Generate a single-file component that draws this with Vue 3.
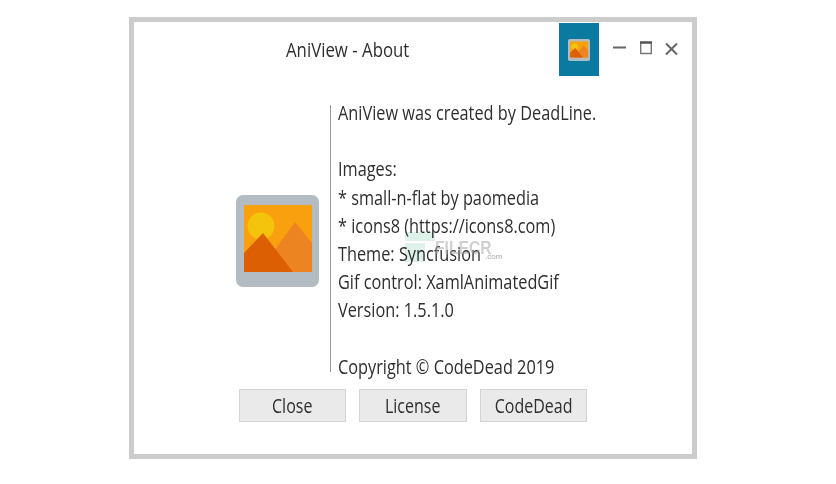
<script setup>
const lines = [
  'AniView was created by DeadLine.',
  '',
  'Images:',
  '* small-n-flat by paomedia',
  '* icons8 (https://icons8.com)',
  'Theme: Syncfusion',
  'Gif control: XamlAnimatedGif',
  'Version: 1.5.1.0',
  '',
  'Copyright © CodeDead 2019'
]
const buttons = ['Close', 'License', 'CodeDead']
</script>

<template>
  <div class="page">
    <div class="window">
      <header class="titlebar">
        <div class="title"><span class="squeeze">AniView - About</span></div>
        <div class="tile">
          <svg width="22" height="22" viewBox="0 0 83 92" preserveAspectRatio="none">
            <use href="#picture" />
          </svg>
        </div>
        <div class="controls">
          <svg width="13" height="14" viewBox="0 0 13 14"><path d="M0 6.500h13" stroke="#666" stroke-width="2" /></svg>
          <svg width="12" height="14" viewBox="0 0 12 14"><path d="M.7 1.500h10.600v11H.7z" fill="none" stroke="#777" stroke-width="1.400" /><path d="M0 1.500h12" stroke="#555" stroke-width="2.400" /></svg>
          <svg class="close" width="13" height="14" viewBox="0 0 13 14"><path d="M1 2.500l11 11M12 2.500l-11 11" stroke="#666" stroke-width="2" /></svg>
        </div>
      </header>

      <main class="body">
        <div class="logo-col">
          <svg class="logo" width="83" height="92" viewBox="0 0 83 92">
            <g id="picture">
              <rect width="83" height="92" rx="7" fill="#b3bcc2" />
              <rect x="8" y="10" width="68" height="67" fill="#f9a00f" />
              <circle cx="25" cy="31" r="13.500" fill="#f4c40d" />
              <path d="M23 77 59 27l17 21v29z" fill="#ec8422" />
              <path d="M8 58 27 38l30 39H8z" fill="#dc5f04" />
            </g>
          </svg>
        </div>
        <div class="rule"></div>
        <div class="text">
          <div class="squeeze-block">
            <p v-for="(line, i) in lines" :key="i" class="line">{{ line }}</p>
          </div>
        </div>
      </main>

      <footer class="footer">
        <div v-for="b in buttons" :key="b" class="btn"><span class="squeeze">{{ b }}</span></div>
      </footer>

      <div class="watermark">
        <span class="wm-bar wm-top"></span>
        <span class="wm-bar wm-low"></span>
        <span class="wm-name">FILECR</span>
        <span class="wm-com">.com</span>
      </div>
    </div>
  </div>
</template>

<style>
html, body { margin: 0; background: #fff; }
</style>

<style scoped>
.page {
  width: 836px;
  height: 484px;
  padding: 17px 0 0 129px;
  box-sizing: border-box;
  overflow: hidden;
  background: #fff;
  font-family: "Open Sans", "Noto Sans", sans-serif;
  color: #2e2e2e;
}
.window {
  position: relative;
  width: 568px;
  height: 442px;
  box-sizing: border-box;
  border: 5px solid #ccc;
  background: #fff;
  display: flex;
  flex-direction: column;
  filter: blur(0.35px);
}
.titlebar {
  display: flex;
  align-items: flex-start;
  height: 77px;
  flex: none;
}
.title {
  width: 425px;
  padding-left: 152px;
  box-sizing: border-box;
  font-size: 20px;
  line-height: 28px;
  margin-top: 14px;
  white-space: nowrap;
}
.squeeze {
  display: inline-block;
  transform: scaleX(0.84);
  transform-origin: left center;
  white-space: nowrap;
}
.tile {
  width: 40px;
  height: 53px;
  margin-top: 1px;
  background: #0b7aa0;
  display: flex;
  align-items: center;
  justify-content: center;
}
.controls {
  display: flex;
  gap: 14px;
  margin: 19px 0 0 14px;
}
.close { margin-left: -1px; }
.body {
  display: flex;
  height: 282px;
  flex: none;
}
.logo-col {
  width: 196px;
  padding: 96px 0 0 102px;
  box-sizing: border-box;
}
.logo { display: block; }
.rule {
  width: 1px;
  height: 267px;
  margin-top: 6px;
  background: #999;
  flex: none;
}
.text {
  padding: 0 0 0 7px;
  margin-top: -1px;
}
.squeeze-block {
  transform: scaleX(0.795);
  transform-origin: left top;
  white-space: nowrap;
  font-size: 20.500px;
}
.line {
  margin: 0;
  height: 28.200px;
  line-height: 28.200px;
}
.footer {
  display: flex;
  gap: 13px;
  padding: 8px 0 0 105px;
}
.btn {
  width: 107px;
  height: 33px;
  box-sizing: border-box;
  border: 1px solid #d4d4d4;
  background: #eaeaea;
  font-size: 20px;
  line-height: 31px;
  display: flex;
  justify-content: center;
}
.btn:nth-child(2) { width: 108px; }
.btn .squeeze {
  transform: scaleX(0.8);
  transform-origin: center center;
}
.watermark {
  position: absolute;
  left: 270px;
  top: 210px;
  width: 120px;
  height: 40px;
  pointer-events: none;
}
.wm-bar {
  position: absolute;
  background: #dff2ea;
  mix-blend-mode: multiply;
}
.wm-top { left: 1px; top: 0; width: 30px; height: 9px; }
.wm-low { left: 1px; top: 11px; width: 20px; height: 19px; }
.wm-name {
  position: absolute;
  left: 31px;
  top: 5px;
  font: bold 18px/22px "Liberation Sans", sans-serif;
  color: #aaa;
  opacity: 0.55;
  transform: scaleX(0.87);
  transform-origin: left center;
}
.wm-com {
  position: absolute;
  left: 81px;
  top: 19px;
  font: 8px/12px "Liberation Sans", sans-serif;
  color: #aaa;
}
</style>
